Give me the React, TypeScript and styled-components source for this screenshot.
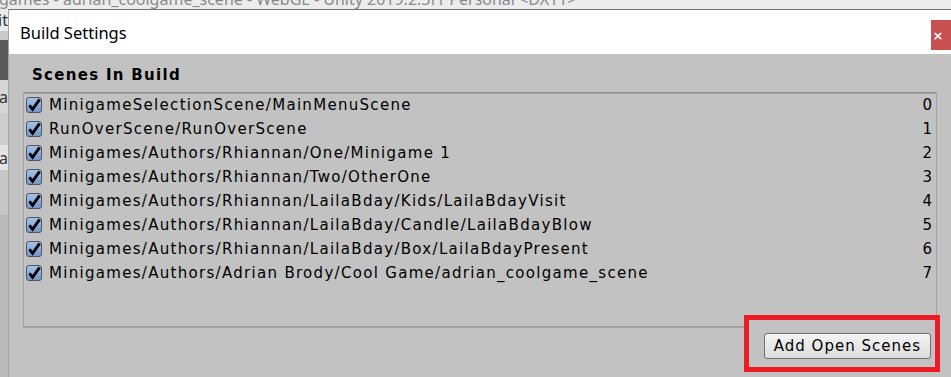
import React from "react";
import styled, { createGlobalStyle } from "styled-components";

const GlobalStyle = createGlobalStyle`
    html, body {
        margin: 0;
        padding: 0;
        overflow: hidden;
        background: #e9e9e9;
    }
`;

interface Scene {
    path: string;
    index: number;
}

const scenes: Scene[] = [
    { path: "MinigameSelectionScene/MainMenuScene", index: 0 },
    { path: "RunOverScene/RunOverScene", index: 1 },
    { path: "Minigames/Authors/Rhiannan/One/Minigame 1", index: 2 },
    { path: "Minigames/Authors/Rhiannan/Two/OtherOne", index: 3 },
    { path: "Minigames/Authors/Rhiannan/LailaBday/Kids/LailaBdayVisit", index: 4 },
    { path: "Minigames/Authors/Rhiannan/LailaBday/Candle/LailaBdayBlow", index: 5 },
    { path: "Minigames/Authors/Rhiannan/LailaBday/Box/LailaBdayPresent", index: 6 },
    { path: "Minigames/Authors/Adrian Brody/Cool Game/adrian_coolgame_scene", index: 7 },
];

// editor bits peeking out on the left
const sideBlocks = [
    { h: 22, bg: "#eaeaea", text: "it" },
    { h: 9, bg: "#c9c9c9", text: "" },
    { h: 40, bg: "#5a5a5a", text: "" },
    { h: 33, bg: "#d6d6d6", text: "a" },
    { h: 32, bg: "#cdcdcd", text: "" },
    { h: 25, bg: "#e4e4e4", text: "a" },
    { h: 45, bg: "#c6c6c6", text: "" },
    { h: 170, bg: "#b9b9b9", text: "" },
];

const Root = styled.div`
    width: 951px;
    height: 377px;
    overflow: hidden;
    display: grid;
    grid-template-columns: 8px 1fr;
    grid-template-rows: 9px 1fr;
    background: #e9e9e9;
`;

const TopStrip = styled.div`
    grid-column: 1 / -1;
    overflow: hidden;
    background: #ececec;
    span {
        display: block;
        margin-top: -10px;
        margin-left: -1px;
        font-family: "Noto Sans", "Open Sans", sans-serif;
        font-size: 16px;
        line-height: 18px;
        color: #8a8a8a;
        white-space: nowrap;
    }
`;

const SideStrip = styled.div`
    display: flex;
    flex-direction: column;
    overflow: hidden;
`;

const SideBlock = styled.div<{ $h: number; $bg: string }>`
    height: ${(p) => p.$h}px;
    flex: none;
    background: ${(p) => p.$bg};
    display: flex;
    align-items: center;
    justify-content: flex-end;
    overflow: hidden;
    font-family: "Noto Sans", sans-serif;
    font-size: 16px;
    color: #333;
    white-space: nowrap;
`;

const Dialog = styled.div`
    display: flex;
    flex-direction: column;
    border-top: 1px solid #707070;
    border-left: 1px solid #a4a4a4;
    background: #c2c2c2;
    min-height: 0;
`;

const TitleBar = styled.div`
    height: 44px;
    flex: none;
    background: #ffffff;
    display: flex;
    align-items: flex-start;
    justify-content: space-between;
    padding-left: 11px;
`;

const Title = styled.div`
    align-self: center;
    margin-top: 1px;
    font-family: "Noto Sans", "Open Sans", sans-serif;
    font-size: 16.5px;
    color: #000;
`;

const CloseButton = styled.div`
    margin-top: 10px;
    width: 20px;
    height: 30px;
    background: #c75050;
    color: #fff;
    display: flex;
    align-items: center;
    justify-content: center;
    padding-right: 6px;
    box-sizing: border-box;
    font-family: "DejaVu Sans", sans-serif;
    font-weight: bold;
    font-size: 13px;
`;

const Content = styled.div`
    padding: 11px 14px 0 14px;
    font-family: "DejaVu Sans", Verdana, sans-serif;
    color: #000;
`;

const Heading = styled.div`
    margin: 0 0 7px 9px;
    height: 20px;
    line-height: 20px;
    font-size: 15px;
    font-weight: bold;
    letter-spacing: 1.3px;
`;

const SceneList = styled.div`
    height: 236px;
    box-sizing: border-box;
    border-top: 1px solid #8e8e8e;
    border-bottom: 2px solid #a2a2a2;
    border-left: 1px solid #a2a2a2;
    border-right: 1px solid #a2a2a2;
    box-shadow: inset 0 1px 0 #a8a8a8;
`;

const Row = styled.div`
    height: 24px;
    display: flex;
    align-items: center;
    gap: 6px;
    padding: 0 4px 0 2px;
    font-size: 15px;
    letter-spacing: 1.3px;
    white-space: nowrap;
`;

const Label = styled.span`
    flex: 1;
    margin-top: -1px;
`;

const Index = styled.span`
    margin-top: -1px;
    letter-spacing: 0;
`;

const Footer = styled.div`
    position: relative;
    display: flex;
    justify-content: flex-end;
    padding: 5px 6px 0 0;
`;

const Annotation = styled.div`
    position: absolute;
    top: -13px;
    right: -3px;
    width: 196px;
    height: 57px;
    box-sizing: border-box;
    border: 5px solid #ed1c24;
    background: #c2c2c2;
`;

const Button = styled.button`
    position: relative;
    z-index: 1;
    height: 26px;
    padding: 0 9px;
    border: 1px solid #707070;
    border-radius: 3px;
    background: linear-gradient(#f4f4f4, #dcdcdc);
    font-family: "DejaVu Sans", Verdana, sans-serif;
    font-size: 15px;
    letter-spacing: 1px;
    color: #000;
`;

const CheckBox: React.FC = () => (
    <svg width="17" height="17" viewBox="0 0 17 17">
        <defs>
            <linearGradient id="cb" x1="0" y1="0" x2="0" y2="1">
                <stop offset="0" stopColor="#a9c4ea" />
                <stop offset="1" stopColor="#6f95cc" />
            </linearGradient>
        </defs>
        <rect x="0.5" y="0.5" width="15" height="15" rx="2.5" fill="url(#cb)" stroke="#4e5560" />
        <path d="M3.4 8.4 L6.6 12.4 L13.6 2.4" fill="none" stroke="#000" strokeWidth="2.8" strokeLinejoin="miter" />
    </svg>
);

const App: React.FC = () => {
    return (
        <Root>
            <GlobalStyle />
            <TopStrip>
                <span>games - adrian_coolgame_scene - WebGL - Unity 2019.2.3f1 Personal &lt;DX11&gt;</span>
            </TopStrip>
            <SideStrip>
                {sideBlocks.map((b, i) => (
                    <SideBlock key={i} $h={b.h} $bg={b.bg}>
                        {b.text}
                    </SideBlock>
                ))}
            </SideStrip>
            <Dialog>
                <TitleBar>
                    <Title>Build Settings</Title>
                    <CloseButton>×</CloseButton>
                </TitleBar>
                <Content>
                    <Heading>Scenes In Build</Heading>
                    <SceneList>
                        {scenes.map((s) => (
                            <Row key={s.index}>
                                <CheckBox />
                                <Label>{s.path}</Label>
                                <Index>{s.index}</Index>
                            </Row>
                        ))}
                    </SceneList>
                    <Footer>
                        <Annotation />
                        <Button>Add Open Scenes</Button>
                    </Footer>
                </Content>
            </Dialog>
        </Root>
    );
};

export default App;
